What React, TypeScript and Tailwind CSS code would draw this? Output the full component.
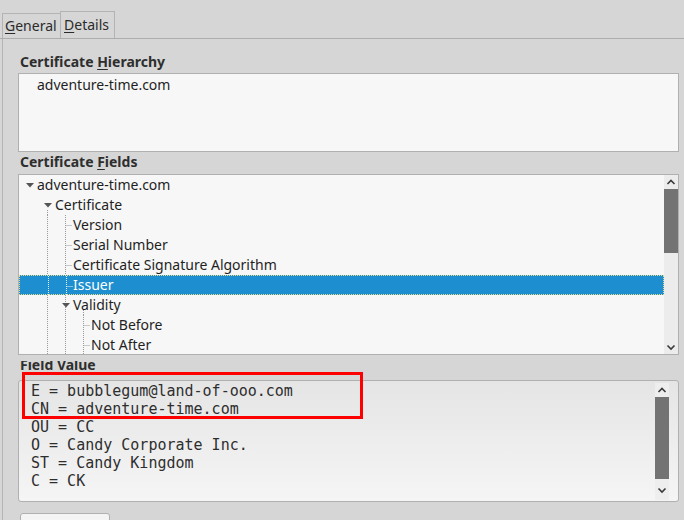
import React from 'react';

type Row = {
  label: string;
  level: number;
  arrow?: boolean;
  selected?: boolean;
  v: number[];
  vStart?: number[];
  h?: [number, number];
};

const c1 = 28.5;
const c2 = 46.5;
const c3 = 64.5;

const rows: Row[] = [
  { label: 'adventure-time.com', level: 0, arrow: true, v: [] },
  { label: 'Certificate', level: 1, arrow: true, v: [], vStart: [c1] },
  { label: 'Version', level: 2, v: [c1, c2], h: [c2, 53] },
  { label: 'Serial Number', level: 2, v: [c1, c2], h: [c2, 53] },
  { label: 'Certificate Signature Algorithm', level: 2, v: [c1, c2], h: [c2, 53] },
  { label: 'Issuer', level: 2, selected: true, v: [c1, c2], h: [c2, 53] },
  { label: 'Validity', level: 2, arrow: true, v: [c1, c2], vStart: [c3] },
  { label: 'Not Before', level: 3, v: [c1, c2, c3], h: [c3, 71] },
  { label: 'Not After', level: 3, v: [c1, c2, c3], h: [c3, 71] },
];

const fieldLines = [
  'E = bubblegum@land-of-ooo.com',
  'CN = adventure-time.com',
  'OU = CC',
  'O = Candy Corporate Inc.',
  'ST = Candy Kingdom',
  'C = CK',
];

const Chevron = ({ up }: { up?: boolean }) => (
  <svg width="14" height="14" viewBox="0 0 14 14" className="shrink-0">
    <polyline
      points={up ? '3.5,9 7,5.5 10.5,9' : '3.5,5.5 7,9 10.5,5.5'}
      fill="none"
      stroke="#3a3a3a"
      strokeWidth="1.6"
    />
  </svg>
);

const TreeRow = ({ row }: { row: Row }) => {
  const stroke = row.selected ? '#e8f2fa' : '#9a9a9a';
  const arrowX = 7 + 18 * row.level;
  return (
    <div
      className={
        'relative h-[20px] whitespace-nowrap ' +
        (row.selected
          ? 'bg-[#1d8ecf] text-white border border-dotted border-[#e9dc86]'
          : 'text-[#1f1f1f]')
      }
    >
      <svg className="absolute left-0 top-0" width="644" height="20">
        {row.v.map((x) => (
          <line key={'v' + x} x1={x} y1={0} x2={x} y2={20} stroke={stroke} strokeDasharray="1 1" />
        ))}
        {(row.vStart || []).map((x) => (
          <line key={'s' + x} x1={x} y1={15} x2={x} y2={20} stroke={stroke} strokeDasharray="1 1" />
        ))}
        {row.h && (
          <line x1={row.h[0]} y1={10.5} x2={row.h[1]} y2={10.5} stroke={stroke} strokeDasharray="1 1" />
        )}
        {row.arrow && (
          <polygon
            points={`${arrowX},8 ${arrowX + 8},8 ${arrowX + 4},12.5`}
            fill="#555555"
          />
        )}
      </svg>
      <span
        className={'relative block ' + (row.selected ? '-ml-px -mt-px' : '')}
        style={{ paddingLeft: 18 + 18 * row.level, lineHeight: '20px' }}
      >
        {row.label}
      </span>
    </div>
  );
};

export default function App() {
  return (
    <div className="relative w-[684px] h-[520px] overflow-hidden bg-[#d6d6d6] font-['Noto_Sans',sans-serif] text-[14px]">
      {/* tabs */}
      <div className="flex items-end h-[39px] pl-[2px] border-b border-[#adadad]">
        <div className="h-[25px] w-[58px] border-l border-t border-[#b3b3b3] pl-[2px] leading-[24px] text-[#2b2b2b]">
          <span className="underline underline-offset-2">G</span>eneral
        </div>
        <div className="h-[27px] w-[55px] border border-b-0 border-[#b3b3b3] pl-[3px] leading-[25px] text-[#2b2b2b]">
          <span className="underline underline-offset-2">D</span>etails
        </div>
      </div>

      <div className="flex flex-col ml-[2px] border-l border-[#b5b5b5] pl-[15px] pr-[5px] pt-[13px]">
        <div className="shrink-0 h-[20px] leading-[20px] pl-[2px] font-bold text-[#2e2e2e]">
          Certificate <span className="underline underline-offset-2">H</span>ierarchy
        </div>
        <div className="shrink-0 mt-[1px] h-[79px] border border-[#b0b0b0] bg-[#f7f7f7] pl-[18px] pt-[1px] leading-[20px] text-[#1f1f1f]">
          adventure-time.com
        </div>

        <div className="shrink-0 h-[20px] leading-[20px] pl-[2px] font-bold text-[#2e2e2e]">
          Certificate <span className="underline underline-offset-2">F</span>ields
        </div>
        <div className="shrink-0 mt-[2px] h-[181px] flex border border-[#b0b0b0] bg-[#f7f7f7] overflow-hidden">
          <div className="flex-1 overflow-hidden">
            {rows.map((r) => (
              <TreeRow key={r.label} row={r} />
            ))}
          </div>
          <div className="w-[14px] flex flex-col bg-[#ececec]">
            <Chevron up />
            <div className="shrink-0 h-[64px] bg-[#737373]" />
            <div className="flex-1" />
            <Chevron />
          </div>
        </div>

        <div className="shrink-0 h-[25px]">
          <div className="mt-[6px] h-[12px] overflow-hidden pl-[2px] font-bold text-[#2e2e2e]">
            <div className="-mt-[6px] leading-[20px]">Field Value</div>
          </div>
        </div>
        <div className="shrink-0 h-[122px] flex rounded-[3px] border border-[#b0b0b0] bg-gradient-to-b from-[#e5e5e5] to-[#f5f5f5]">
          <div className="flex-1 pl-[12px] pt-[1px] font-['DejaVu_Sans_Mono',monospace] text-[15px] leading-[18px] text-[#2e2e2e] whitespace-pre">
            {fieldLines.map((l) => (
              <div key={l}>{l}</div>
            ))}
          </div>
          <div className="w-[14px] mt-[2px] mb-[1px] mr-[9px] flex flex-col bg-[#eeeeee]">
            <Chevron up />
            <div className="flex-1 bg-[#737373]" />
            <div className="h-[21px] flex items-center">
              <Chevron />
            </div>
          </div>
        </div>

        <div className="shrink-0 mt-[11px] ml-[2px] w-[90px] h-[20px] rounded-t-[3px] border border-[#b0b0b0] bg-[#f4f4f4]" />
      </div>

      {/* annotation */}
      <div className="absolute left-[22px] top-[372px] w-[341px] h-[47px] border-[3px] border-[#ff0000]" />
    </div>
  );
}
